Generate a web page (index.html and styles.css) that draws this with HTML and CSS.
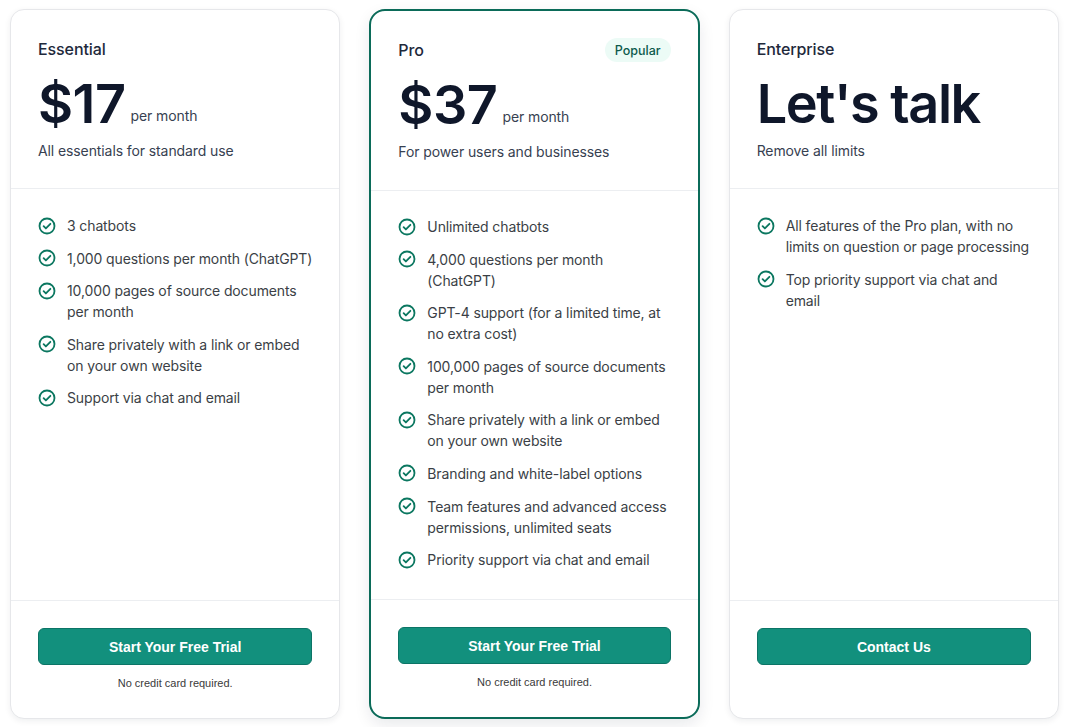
FILE: index.html
```html
<!DOCTYPE html>
<html lang="en">
<head>
<meta charset="utf-8">
<title>Pricing</title>
<link rel="stylesheet" href="styles.css">
</head>
<body>
<div class="plans">
  <section class="card">
    <header class="card-head">
      <div class="title-row"><h2 class="plan-name">Essential</h2></div>
      <div class="price"><span class="amount">$17</span><span class="period">per month</span></div>
      <p class="desc">All essentials for standard use</p>
    </header>
    <ul class="features">
      <li><svg class="check" viewBox="0 0 24 24"><circle cx="12" cy="12" r="10"/><path d="M7.5 12.3l3 3 6-6.2"/></svg><span>3 chatbots</span></li>
      <li><svg class="check" viewBox="0 0 24 24"><circle cx="12" cy="12" r="10"/><path d="M7.5 12.3l3 3 6-6.2"/></svg><span>1,000 questions per month (ChatGPT)</span></li>
      <li><svg class="check" viewBox="0 0 24 24"><circle cx="12" cy="12" r="10"/><path d="M7.5 12.3l3 3 6-6.2"/></svg><span>10,000 pages of source documents per month</span></li>
      <li><svg class="check" viewBox="0 0 24 24"><circle cx="12" cy="12" r="10"/><path d="M7.5 12.3l3 3 6-6.2"/></svg><span>Share privately with a link or embed on your own website</span></li>
      <li><svg class="check" viewBox="0 0 24 24"><circle cx="12" cy="12" r="10"/><path d="M7.5 12.3l3 3 6-6.2"/></svg><span>Support via chat and email</span></li>
    </ul>
    <footer class="card-foot">
      <button class="cta">Start Your Free Trial</button>
      <p class="note">No credit card required.</p>
    </footer>
  </section>

  <section class="card card-pro">
    <header class="card-head">
      <div class="title-row"><h2 class="plan-name">Pro</h2><span class="badge">Popular</span></div>
      <div class="price"><span class="amount">$37</span><span class="period">per month</span></div>
      <p class="desc">For power users and businesses</p>
    </header>
    <ul class="features">
      <li><svg class="check" viewBox="0 0 24 24"><circle cx="12" cy="12" r="10"/><path d="M7.5 12.3l3 3 6-6.2"/></svg><span>Unlimited chatbots</span></li>
      <li><svg class="check" viewBox="0 0 24 24"><circle cx="12" cy="12" r="10"/><path d="M7.5 12.3l3 3 6-6.2"/></svg><span>4,000 questions per month (ChatGPT)</span></li>
      <li><svg class="check" viewBox="0 0 24 24"><circle cx="12" cy="12" r="10"/><path d="M7.5 12.3l3 3 6-6.2"/></svg><span>GPT-4 support (for a limited time, at no extra cost)</span></li>
      <li><svg class="check" viewBox="0 0 24 24"><circle cx="12" cy="12" r="10"/><path d="M7.5 12.3l3 3 6-6.2"/></svg><span>100,000 pages of source documents per month</span></li>
      <li><svg class="check" viewBox="0 0 24 24"><circle cx="12" cy="12" r="10"/><path d="M7.5 12.3l3 3 6-6.2"/></svg><span>Share privately with a link or embed on your own website</span></li>
      <li><svg class="check" viewBox="0 0 24 24"><circle cx="12" cy="12" r="10"/><path d="M7.5 12.3l3 3 6-6.2"/></svg><span>Branding and white-label options</span></li>
      <li><svg class="check" viewBox="0 0 24 24"><circle cx="12" cy="12" r="10"/><path d="M7.5 12.3l3 3 6-6.2"/></svg><span>Team features and advanced access permissions, unlimited seats</span></li>
      <li><svg class="check" viewBox="0 0 24 24"><circle cx="12" cy="12" r="10"/><path d="M7.5 12.3l3 3 6-6.2"/></svg><span>Priority support via chat and email</span></li>
    </ul>
    <footer class="card-foot">
      <button class="cta">Start Your Free Trial</button>
      <p class="note">No credit card required.</p>
    </footer>
  </section>

  <section class="card">
    <header class="card-head">
      <div class="title-row"><h2 class="plan-name">Enterprise</h2></div>
      <div class="price"><span class="amount amount-text">Let's talk</span></div>
      <p class="desc">Remove all limits</p>
    </header>
    <ul class="features">
      <li><svg class="check" viewBox="0 0 24 24"><circle cx="12" cy="12" r="10"/><path d="M7.5 12.3l3 3 6-6.2"/></svg><span>All features of the Pro plan, with no limits on question or page processing</span></li>
      <li><svg class="check" viewBox="0 0 24 24"><circle cx="12" cy="12" r="10"/><path d="M7.5 12.3l3 3 6-6.2"/></svg><span>Top priority support via chat and email</span></li>
    </ul>
    <footer class="card-foot">
      <button class="cta">Contact Us</button>
    </footer>
  </section>
</div>
</body>
</html>
```

FILE: styles.css
```css
* { box-sizing: border-box; }

html, body {
  margin: 0;
  background: #ffffff;
}

body {
  font-family: "Inter", "Noto Sans", sans-serif;
  color: #374151;
}

.plans {
  display: grid;
  grid-template-columns: repeat(3, 1fr);
  gap: 29px;
  padding: 9px 11px 9px 10px;
}

.card {
  height: 710px;
  display: flex;
  flex-direction: column;
  background: #ffffff;
  border: 1px solid #e6e7ea;
  border-radius: 14px;
  box-shadow: 0 2px 6px rgba(15, 23, 42, 0.07);
}

.card-pro {
  border: 2px solid #0b6b59;
  border-radius: 16px;
  box-shadow: 0 6px 16px rgba(15, 23, 42, 0.09);
}

.card-head {
  padding: 27px 27px 27px;
  border-bottom: 1px solid #eceef1;
}

.card-pro .card-head {
  padding-bottom: 28px;
}

.title-row {
  display: flex;
  align-items: center;
  justify-content: space-between;
  height: 24px;
}

.plan-name {
  margin: 0;
  font-size: 16px;
  font-weight: 500;
  color: #1e293b;
  line-height: 24px;
  letter-spacing: -0.1px;
}

.badge {
  display: inline-flex;
  align-items: center;
  height: 24px;
  padding: 0 10px;
  border-radius: 12px;
  background: #ecfbf6;
  color: #0c5a4c;
  font-size: 12.5px;
  font-weight: 500;
}

.price {
  margin-top: 16px;
  height: 54px;
  white-space: nowrap;
}

.amount {
  font-size: 54px;
  line-height: 54px;
  font-weight: 600;
  color: #0f172a;
  letter-spacing: -0.5px;
}

.amount-text {
  letter-spacing: -1.4px;
}

.period {
  margin-left: 5px;
  font-size: 14px;
  color: #374151;
  vertical-align: 2px;
  letter-spacing: -0.1px;
}

.desc {
  margin: 9px 0 0;
  font-size: 14px;
  line-height: 21px;
  color: #374151;
  letter-spacing: -0.1px;
}

.features {
  flex: 1;
  list-style: none;
  margin: 0;
  padding: 26px 27px 0;
  display: flex;
  flex-direction: column;
  gap: 11.6px;
}

.card-pro .features {
  padding-top: 25px;
}

.features li {
  display: flex;
  align-items: flex-start;
  gap: 11px;
  font-size: 14px;
  line-height: 21px;
  color: #3b3f46;
  letter-spacing: -0.12px;
}

.check {
  flex: none;
  width: 18px;
  height: 18px;
  margin-top: 1.5px;
  fill: none;
  stroke: #0b7760;
  stroke-width: 2.4;
  stroke-linecap: round;
  stroke-linejoin: round;
}

.card-foot {
  height: 118px;
  flex: none;
  border-top: 1px solid #eceef1;
  padding: 27px 27px 0;
  display: flex;
  flex-direction: column;
  align-items: stretch;
}

.cta {
  height: 37px;
  border: 1px solid #0c7466;
  border-radius: 6px;
  background: #12907d;
  color: #ffffff;
  font-family: "Liberation Sans", Arial, sans-serif;
  font-size: 14px;
  font-weight: 700;
  cursor: pointer;
}

.note {
  margin: 10px 0 0;
  text-align: center;
  font-family: "Liberation Sans", Arial, sans-serif;
  font-size: 11px;
  line-height: 16px;
  color: #3a3a3a;
}
```
